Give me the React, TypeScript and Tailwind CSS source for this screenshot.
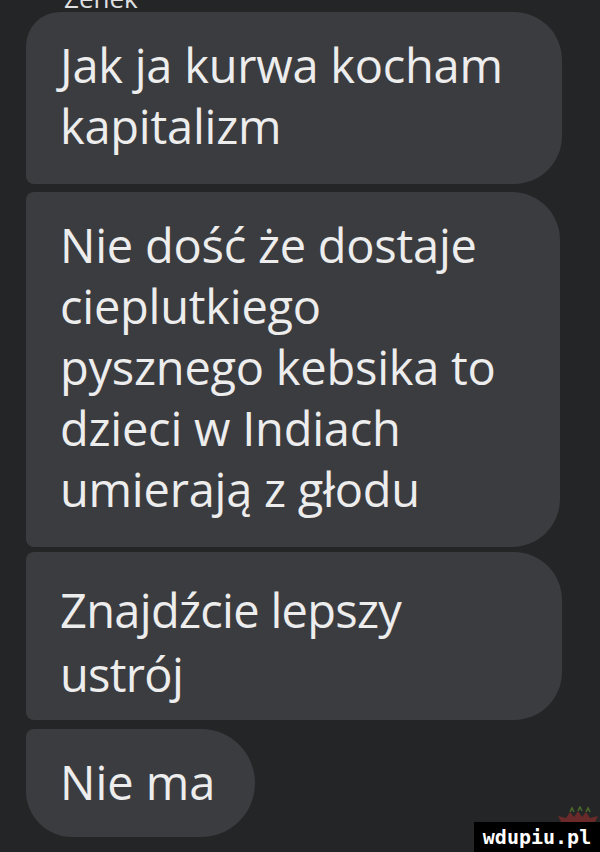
import React from "react";

const font = { fontFamily: '"Open Sans", "Noto Sans", sans-serif' };

export default function App() {
  return (
    <div
      className="relative w-[600px] h-[852px] overflow-hidden bg-[#232527] text-[#ededed]"
      style={font}
    >
      <div className="h-[12px] overflow-hidden pl-[64px]">
        <div className="mt-[-15px] text-[26px] leading-[26px] text-[#e0e0e0]">Zenek</div>
      </div>
      <div className="flex flex-col pl-[26px]">
        <div className="w-[536px] bg-[#3b3c3f] rounded-tl-[34px] rounded-tr-[48px] rounded-br-[48px] rounded-bl-[8px] pl-[34px] pt-[23px] pb-[27px] text-[47px] leading-[61px] tracking-[-0.005em]">
          <div>Jak ja kurwa kocham</div>
          <div>kapitalizm</div>
        </div>
        <div className="mt-[8px] w-[534px] bg-[#3b3c3f] rounded-tl-[8px] rounded-tr-[48px] rounded-br-[48px] rounded-bl-[8px] pl-[34px] pt-[23px] pb-[27px] text-[47px] leading-[61px] tracking-[-0.005em]">
          <div>Nie dość że dostaje</div>
          <div>cieplutkiego</div>
          <div>pysznego kebsika to</div>
          <div>dzieci w Indiach</div>
          <div>umierają z głodu</div>
        </div>
        <div className="mt-[5px] w-[536px] bg-[#3b3c3f] rounded-tl-[8px] rounded-tr-[48px] rounded-br-[48px] rounded-bl-[8px] pl-[34px] pt-[26px] pb-[14px] text-[47px] leading-[64px] tracking-[-0.015em]">
          <div>Znajdźcie lepszy</div>
          <div>ustrój</div>
        </div>
        <div className="mt-[9px] w-[229px] bg-[#3b3c3f] rounded-tl-[8px] rounded-tr-[54px] rounded-br-[54px] rounded-bl-[46px] pl-[34px] pt-[23px] pb-[24px] text-[47px] leading-[61px] tracking-[0em]">
          <div>Nie ma</div>
        </div>
      </div>
      <svg className="absolute left-[556px] top-[806px]" width="44" height="18" viewBox="0 0 44 18">
        <path d="M2 10 L10 12 L14 6 L18 11 L22 5 L26 11 L30 6 L34 12 L42 10 L38 18 L6 18 Z" fill="#6b2a2a" />
        <path d="M14 6 L16 2 L18 6 M22 5 L24 1 L26 5 M30 6 L32 2 L34 6" stroke="#4b6a2a" strokeWidth="1.5" fill="none" />
      </svg>
      <div className="absolute left-[474px] top-[822px] w-[126px] h-[30px] bg-black flex items-center justify-center">
        <span
          className="text-white text-[20px] font-bold leading-none"
          style={{ fontFamily: '"DejaVu Sans Mono", monospace' }}
        >
          wdupiu.pl
        </span>
      </div>
    </div>
  );
}
